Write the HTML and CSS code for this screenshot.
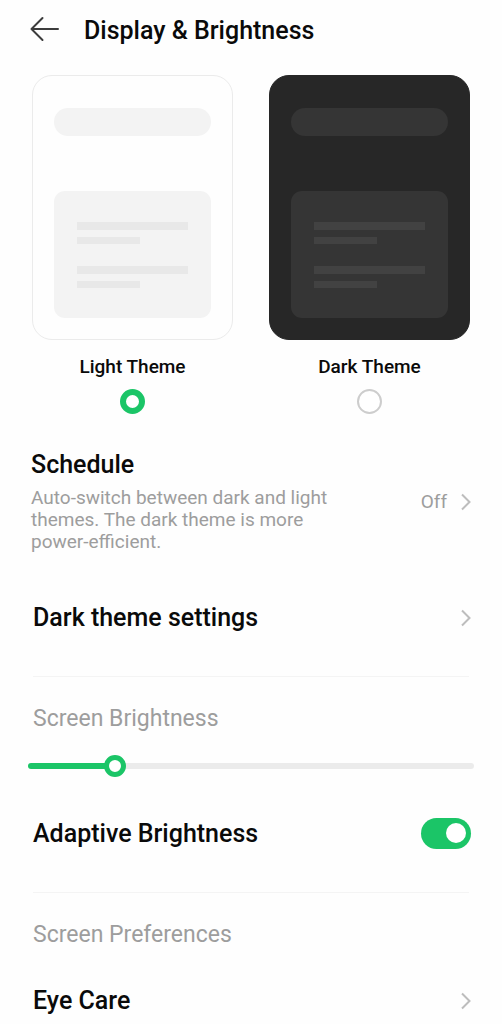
FILE: index.html
```html
<!DOCTYPE html>
<html lang="en">
<head>
<meta charset="utf-8">
<meta name="viewport" content="width=device-width, initial-scale=1">
<title>Display &amp; Brightness</title>
<link rel="stylesheet" href="styles.css">
</head>
<body>
<header class="header">
  <button class="back" type="button" aria-label="Back">
    <svg width="30" height="26" viewBox="0 0 30 26" fill="none" stroke="#3c3c3c" stroke-width="2" stroke-linecap="round" stroke-linejoin="round"><path d="M28 13H1.500M12.500 2L1.500 13L12.500 24"/></svg>
  </button>
  <h1 class="title">Display &amp; Brightness</h1>
</header>
<main>
  <div class="themes" role="radiogroup" aria-label="Theme">
    <label class="theme">
      <span class="preview">
        <span class="pill"></span>
        <span class="panel"><span class="line"></span><span class="line short"></span><span class="line"></span><span class="line short"></span></span>
      </span>
      <span class="theme-name">Light Theme</span>
      <input class="radio" type="radio" name="theme" value="light" checked>
    </label>
    <label class="theme">
      <span class="preview dark">
        <span class="pill"></span>
        <span class="panel"><span class="line"></span><span class="line short"></span><span class="line"></span><span class="line short"></span></span>
      </span>
      <span class="theme-name">Dark Theme</span>
      <input class="radio" type="radio" name="theme" value="dark">
    </label>
  </div>

  <button class="schedule" type="button">
    <span class="schedule-text">
      <span class="label">Schedule</span>
      <span class="description">Auto-switch between dark and light themes. The dark theme is more power-efficient.</span>
    </span>
    <span class="value">Off</span>
    <svg class="chevron" width="10" height="18" viewBox="0 0 10 18"><path d="M1 1.500L8.500 9L1 16.500"/></svg>
  </button>

  <button class="row" type="button">
    <span class="label">Dark theme settings</span>
    <svg class="chevron" width="10" height="18" viewBox="0 0 10 18"><path d="M1 1.500L8.500 9L1 16.500"/></svg>
  </button>

  <section class="section">
    <label class="section-title" for="brightness">Screen Brightness</label>
    <input class="slider" id="brightness" type="range" min="0" max="100" value="18">
    <div class="row">
      <label class="label" for="adaptive">Adaptive Brightness</label>
      <input class="switch" id="adaptive" type="checkbox" role="switch" checked>
    </div>
  </section>

  <section class="section">
    <h2 class="section-title">Screen Preferences</h2>
    <button class="row compact" type="button">
      <span class="label">Eye Care</span>
      <svg class="chevron" width="10" height="18" viewBox="0 0 10 18"><path d="M1 1.500L8.500 9L1 16.500"/></svg>
    </button>
  </section>
</main>
</body>
</html>
```
FILE: styles.css
```css
* { box-sizing: border-box; }

body {
  margin: 0;
  background: #fefefe;
  color: #0a0a0a;
  font-family: Roboto, "Liberation Sans", sans-serif;
}

button {
  border: 0;
  padding: 0;
  background: none;
  color: inherit;
  font: inherit;
  text-align: left;
  cursor: pointer;
}

input { appearance: none; margin: 0; cursor: pointer; }

.header {
  display: flex;
  align-items: center;
  gap: 24px;
  padding: 16px 30px 14px;
}

.back { display: flex; padding-bottom: 4px; }

.title {
  margin: 0;
  font-size: 25px;
  line-height: 30px;
  font-weight: 500;
}

.themes {
  display: flex;
  gap: 36px;
  padding: 15px 32px 36px;
}

.theme {
  flex: 1;
  display: flex;
  flex-direction: column;
  align-items: center;
  cursor: pointer;
}

.preview {
  --pill: #f3f3f3;
  --line: #e8e8e8;
  align-self: stretch;
  display: flex;
  flex-direction: column;
  gap: 55px;
  padding: 32px 21px 21px;
  border: 1px solid #ebebeb;
  border-radius: 20px;
}

.preview.dark {
  --pill: #353535;
  --line: #424242;
  background: #272727;
  border-color: #272727;
}

.pill {
  height: 28px;
  border-radius: 14px;
  background: var(--pill);
}

.panel {
  display: flex;
  flex-direction: column;
  gap: 7px;
  padding: 31px 23px 30px;
  border-radius: 11px;
  background: var(--pill);
}

.line { height: 8px; background: var(--line); }
.line.short { width: 57%; height: 7px; }
.line.short + .line { margin-top: 15px; }

.theme-name {
  margin: 15px 0 10px;
  font-size: 19px;
  line-height: 24px;
  font-weight: 500;
}

.radio {
  width: 25px;
  height: 25px;
  border: 2px solid #cdcdcd;
  border-radius: 50%;
  background: #fff;
}

.radio:checked { border: 6px solid #1bc567; }

.label {
  font-size: 25px;
  line-height: 30px;
  font-weight: 500;
}

.schedule {
  display: flex;
  align-items: center;
  width: 100%;
  padding: 0 31px;
}

.schedule-text {
  flex: 1;
  display: flex;
  flex-direction: column;
  gap: 7px;
}

.description {
  max-width: 310px;
  color: #9d9d9d;
  font-size: 19px;
  line-height: 22px;
}

.value {
  margin-right: 14px;
  color: #9d9d9d;
  font-size: 19px;
  line-height: 22px;
}

.chevron {
  flex: none;
  fill: none;
  stroke: #bdbdbd;
  stroke-width: 2;
}

.row {
  display: flex;
  align-items: center;
  justify-content: space-between;
  width: 100%;
  padding: 50px 31px 43px 33px;
}

.section::before {
  content: "";
  display: block;
  height: 1px;
  margin: 0 33px;
  background: #f4f4f4;
}

.section-title {
  display: block;
  margin: 0;
  padding: 28px 33px 0;
  color: #9d9d9d;
  font-size: 23px;
  line-height: 28px;
  font-weight: 400;
}

.slider {
  display: block;
  width: calc(100% - 56px);
  height: 22px;
  margin: 22px 28px 0;
  background: none;
}

.slider::-webkit-slider-runnable-track {
  height: 6px;
  border-radius: 3px;
  background: linear-gradient(90deg, #1bc567 18%, #ebebeb 18%);
}

.slider::-webkit-slider-thumb {
  appearance: none;
  width: 22px;
  height: 22px;
  margin-top: -8px;
  border: 5px solid #1bc567;
  border-radius: 50%;
  background: #fff;
}

.section .row { padding-top: 41px; }
.section .row.compact { padding-top: 37px; padding-bottom: 8px; }

.switch {
  width: 50px;
  height: 31px;
  border-radius: 16px;
  background: #cdcdcd;
}

.switch::before {
  content: "";
  display: block;
  width: 20px;
  height: 20px;
  margin: 5px 6px;
  border-radius: 50%;
  background: #fff;
}

.switch:checked { background: #1bc567; }
.switch:checked::before { margin-left: 25px; }
```
